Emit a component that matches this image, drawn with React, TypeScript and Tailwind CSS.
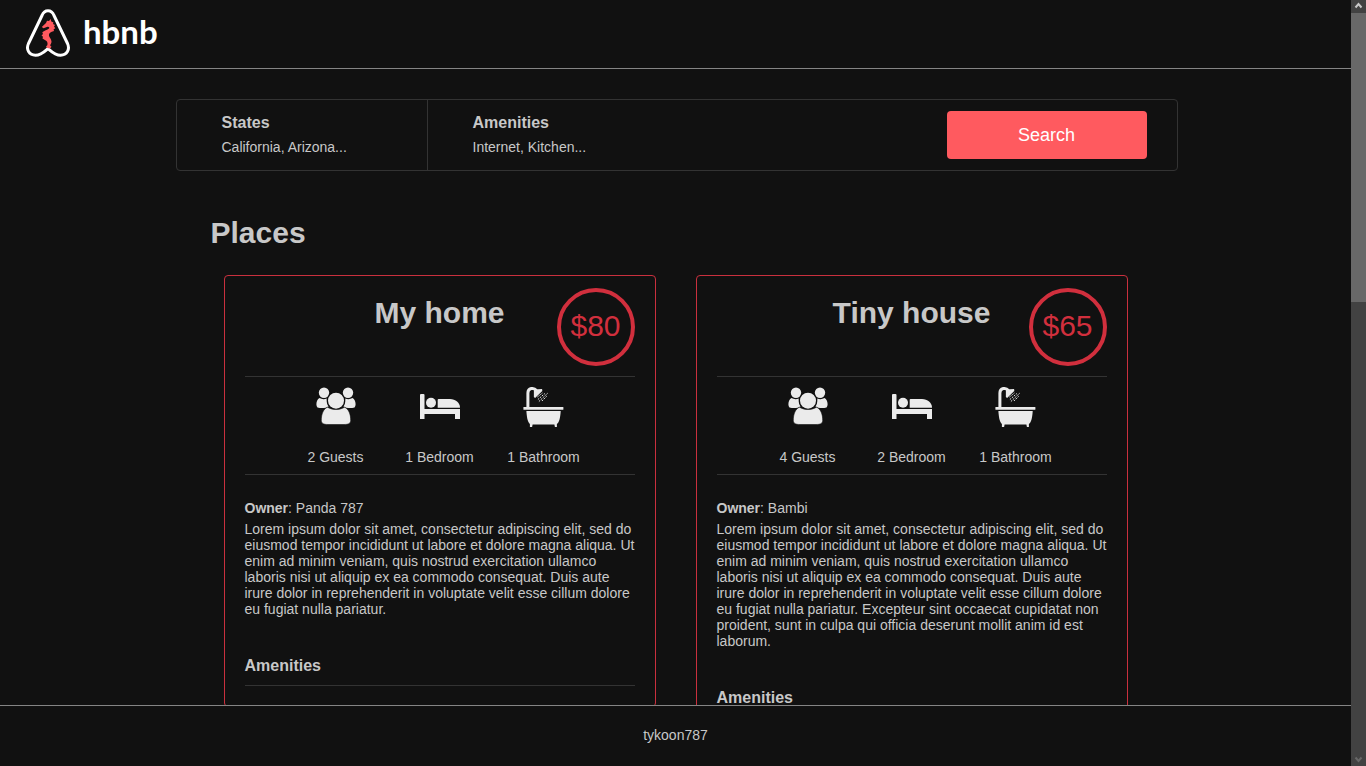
type Place = {
  name: string;
  price: number;
  guests: number;
  bedrooms: number;
  bathrooms: number;
  owner: string;
  description: string;
};

const LOREM =
  'Lorem ipsum dolor sit amet, consectetur adipiscing elit, sed do eiusmod tempor incididunt ut labore et dolore magna aliqua. Ut enim ad minim veniam, quis nostrud exercitation ullamco laboris nisi ut aliquip ex ea commodo consequat. Duis aute irure dolor in reprehenderit in voluptate velit esse cillum dolore eu fugiat nulla pariatur.';

const PLACES: Place[] = [
  { name: 'My home', price: 80, guests: 2, bedrooms: 1, bathrooms: 1, owner: 'Panda 787', description: LOREM },
  {
    name: 'Tiny house',
    price: 65,
    guests: 4,
    bedrooms: 2,
    bathrooms: 1,
    owner: 'Bambi',
    description: LOREM + ' Excepteur sint occaecat cupidatat non proident, sunt in culpa qui officia deserunt mollit anim id est laborum.',
  },
];

function Logo() {
  return (
    <a href="#" aria-label="hbnb" className="flex items-start gap-3 text-white">
      <svg viewBox="26 9 45 48" className="h-12 w-[45px]" aria-hidden="true">
        <path
          d="M48 48.500C44 52 41 55.200 35.500 55.200C29 55.200 25.800 49.500 28.500 43.500L42 15.500C44.500 9.300 51.500 9.300 54 15.500L67.500 43.500C70.200 49.500 67 55.200 60.500 55.200C55 55.200 52 52 48 48.500Z"
          fill="none"
          stroke="#fff"
          strokeWidth="3"
          strokeLinejoin="round"
        />
        <path
          d="M50.700 19L51.300 21.500L53.500 22.500L53 24L55 25L54 26.500L55.300 28.200L53.600 29.200L54 31L51.800 31.800C49.800 32.400 48.700 34 49 35.800C49.300 37.500 51.300 39 51.500 41.500C51.700 43.500 50 44.500 50.300 45.700L51.500 46.800L50 48.500L47.300 48L46 46.200L47.200 45.500C47.800 44 47.700 42.300 46.500 41L42.500 38.500L43 36.800L41.500 35.500L43 34L42.300 32.300C44 30.500 47.500 30 49 28.500C49.700 27.500 49 26.500 47.500 26.700L43.500 28.200L41.800 27L46 23L47 20.800L49 21Z"
          fill="#ff5a5f"
        />
      </svg>
      <span className="pt-1 font-[Lato,sans-serif] text-[33px] leading-9 font-bold">hbnb</span>
    </a>
  );
}

function GuestsIcon() {
  return (
    <svg viewBox="0 0 40 40" className="size-10" fill="#ebebeb" aria-hidden="true">
      <circle cx="8" cy="5.700" r="5.200" />
      <circle cx="32" cy="5.700" r="5.200" />
      <path d="M3.500 11C5.500 12.300 8.500 12.500 10.700 11.500C10.500 14.500 11 17.500 12.500 19.500C10 21.300 5 21.500 1.500 20.500C-.5 18.500 .3 12.500 3.500 11Z" />
      <path d="M36.500 11C34.500 12.300 31.500 12.500 29.300 11.500C29.500 14.500 29 17.500 27.500 19.500C30 21.300 35 21.500 38.500 20.500C40.500 18.500 39.700 12.500 36.500 11Z" />
      <circle cx="20" cy="13.700" r="9" fill="#111" />
      <circle cx="20" cy="13.700" r="8" />
      <path
        d="M11.500 20.200C16.500 23.300 23.500 23.300 28.500 20.200C32.500 21.800 34.800 27 34.700 33.500C34.500 36.500 32.500 37.500 28 37.500H12C7.500 37.500 5.500 36.500 5.300 33.500C5.200 27 7.500 21.800 11.500 20.200Z"
        stroke="#111"
        strokeWidth=".6"
      />
    </svg>
  );
}

function BedIcon() {
  return (
    <svg viewBox="0 0 40 40" className="size-10" fill="#ebebeb" aria-hidden="true">
      <path d="M0 8Q0 7 1 7H3.500Q4.500 7 4.500 8V22H40V32H35V27H4.500V32H0Z" />
      <circle cx="11" cy="15.800" r="5" />
      <path d="M18.500 12H30C35.500 12 40 15.500 40 20.700H17.700V13Q17.700 12 18.500 12Z" />
    </svg>
  );
}

function BathIcon() {
  return (
    <svg viewBox="0.6 0 40 40" className="size-10 overflow-visible" fill="#ebebeb" aria-hidden="true">
      <path d="M4.500 21V6C4.500 .8 10.500 .2 13 3.500" fill="none" stroke="#ebebeb" strokeWidth="3" />
      <path d="M10.500 2.500L18.700 2L18.900 4L11.700 11L10.500 10Z" />
      <path
        d="M14 10L19 6M14.500 12.500L21.500 6.500M15.500 14.500L24.500 6M18.500 14L23.500 9"
        stroke="#ebebeb"
        strokeWidth="1"
        strokeDasharray="1.600 1"
      />
      <rect y="20" width="40" height="2.800" rx=".6" />
      <path d="M3 24H37.300C37 30 36 35.500 33.500 37V40H31.500L31 37.500H9.200L8.700 40H6.500V37C4 35 3.300 29 3 24Z" />
    </svg>
  );
}

function plural(count: number, noun: string) {
  return `${count} ${noun}${count === 1 ? '' : 's'}`;
}

function PlaceCard({ place }: { place: Place }) {
  const facts = [
    { icon: <GuestsIcon />, label: plural(place.guests, 'Guest') },
    { icon: <BedIcon />, label: `${place.bedrooms} Bedroom` },
    { icon: <BathIcon />, label: plural(place.bathrooms, 'Bathroom') },
  ];
  return (
    <article className="w-[432px] rounded-sm border border-[#c9303e] px-5 pb-5">
      <div className="relative flex h-[100px] justify-center pt-4">
        <h2 className="text-[30px] leading-[42px] font-bold">{place.name}</h2>
        <div className="absolute top-3 right-0 size-[78px] rounded-full border-4 border-[#d12f3d] text-center text-[30px] leading-[68px] text-[#d12f3d]">
          ${place.price}
        </div>
      </div>
      <ul className="flex h-[99px] justify-center gap-1 border-y border-[#333] pt-[10px]">
        {facts.map((fact) => (
          <li key={fact.label} className="flex w-[100px] flex-col items-center gap-[22px]">
            {fact.icon}
            <span className="leading-4">{fact.label}</span>
          </li>
        ))}
      </ul>
      <p className="mt-[25px] leading-4">
        <b>Owner</b>: {place.owner}
      </p>
      <p className="mt-[5px] leading-4">{place.description}</p>
      <h3 className="mt-10 border-b border-[#333] pb-[10px] text-base leading-[18px] font-bold">Amenities</h3>
    </article>
  );
}

function Filter({ title, summary, divided }: { title: string; summary: string; divided?: boolean }) {
  return (
    <div className={`w-[251px] pt-3 pl-[45px] ${divided ? 'border-r border-[#333]' : ''}`}>
      <h3 className="text-base leading-[22px] font-semibold">{title}</h3>
      <p className="mt-[5px] leading-4">{summary}</p>
    </div>
  );
}

function ScrollTrack() {
  return (
    <div aria-hidden="true" className="flex w-[15px] shrink-0 flex-col items-center bg-[#424242]">
      <svg viewBox="0 0 15 13" className="h-[13px] w-[15px] shrink-0">
        <path d="M4.500 7.500L7.500 4L10.500 7.500" fill="none" stroke="#c8c8c8" strokeWidth="2" />
      </svg>
      <div className="min-h-0 w-full flex-1">
        <div className="h-[39%] bg-[#686868]" />
      </div>
      <svg viewBox="0 0 15 13" className="h-[13px] w-[15px] shrink-0">
        <path d="M4.500 4.500L7.500 8L10.500 4.500" fill="none" stroke="#686868" strokeWidth="2" />
      </svg>
    </div>
  );
}

export default function App() {
  return (
    <div className="flex h-screen bg-[#111] font-['Liberation_Sans',Arial,sans-serif] text-sm text-[#c8c8c8]">
      <div className="flex min-w-0 flex-1 flex-col">
        <header className="h-[69px] shrink-0 border-b border-[#858585] px-[26px] pt-[9px]">
          <Logo />
        </header>
        <main className="min-h-0 flex-1 overflow-hidden">
          <div className="mx-auto max-w-[1000px] pt-[30px]">
            <section className="box-content flex h-[70px] w-full rounded-sm border border-[#333]">
              <Filter title="States" summary="California, Arizona..." divided />
              <Filter title="Amenities" summary="Internet, Kitchen..." />
              <button
                type="button"
                className="mr-[30px] ml-auto h-12 w-[200px] self-center rounded-sm bg-[#ff5a5f] text-lg text-white"
              >
                Search
              </button>
            </section>
            <section className="mt-10">
              <h1 className="pl-[35px] text-[30px] leading-[44px] font-bold">Places</h1>
              <div className="mt-5 flex flex-wrap items-start justify-center gap-10">
                {PLACES.map((place) => (
                  <PlaceCard key={place.name} place={place} />
                ))}
              </div>
            </section>
          </div>
        </main>
        <footer className="h-[61px] shrink-0 border-t border-[#858585] text-center leading-[58px]">tykoon787</footer>
      </div>
      <ScrollTrack />
    </div>
  );
}
